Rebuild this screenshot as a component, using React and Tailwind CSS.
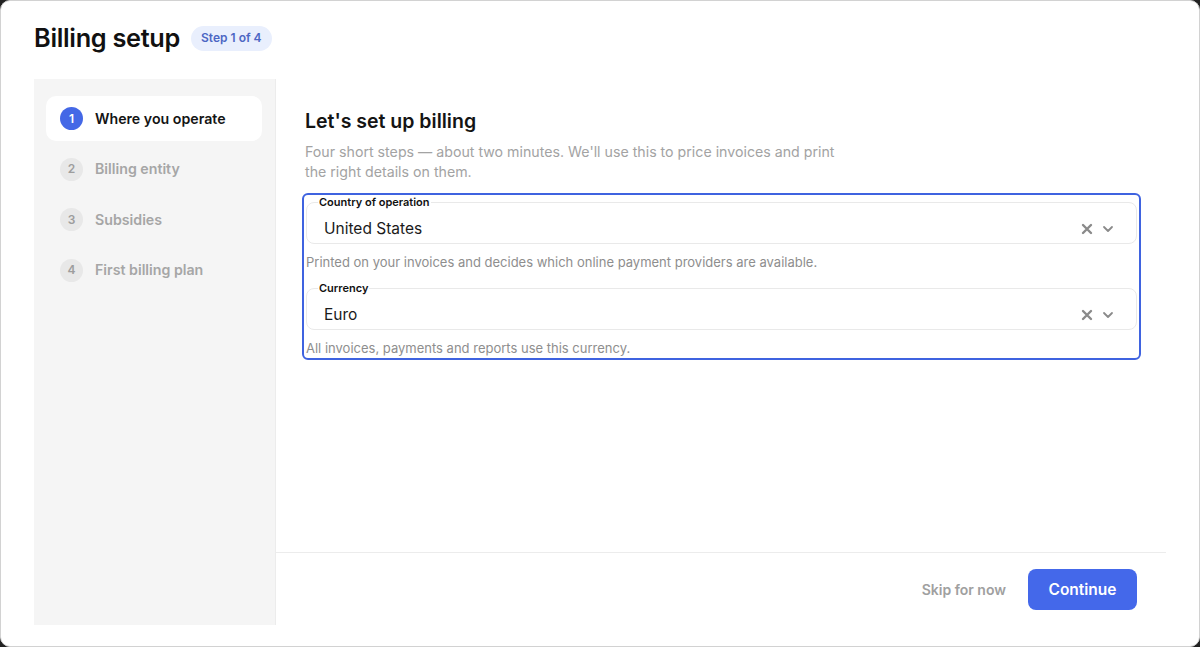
import React from "react";

const font = { fontFamily: "Inter, 'Noto Sans', sans-serif" };

function XIcon() {
  return (
    <svg width="12" height="12" viewBox="0 0 12 12" className="text-[#8a8a8a]">
      <path d="M2 2L10 10M10 2L2 10" stroke="currentColor" strokeWidth="2.4" strokeLinecap="round" />
    </svg>
  );
}
function Chevron() {
  return (
    <svg width="12" height="12" viewBox="0 0 12 12" className="text-[#8a8a8a]">
      <path d="M2 4L6 8L10 4" stroke="currentColor" strokeWidth="1.8" fill="none" strokeLinecap="round" strokeLinejoin="round" />
    </svg>
  );
}

function Field({ label, value }) {
  return (
    <fieldset className="border border-[#e9e9e9] rounded-lg pl-[11px] pr-[22px] m-0 min-w-0">
      <legend className="px-[1px] text-[11px] leading-[14px] font-semibold text-[#111]">{label}</legend>
      <div className="h-[34px] flex items-center pl-[6px] pt-[6px]">
        <span className="flex-1 text-[15.5px] text-[#1a1a1a]">{value}</span>
        <div className="flex items-center gap-[9px]">
          <XIcon />
          <Chevron />
        </div>
      </div>
    </fieldset>
  );
}

function Step({ n, label, active }) {
  return (
    <div
      className={
        "h-[45px] flex items-center gap-[12px] px-[14px] rounded-[10px] " +
        (active ? "bg-white" : "")
      }
    >
      <div
        className={
          "w-[23px] h-[23px] rounded-full flex items-center justify-center text-[12px] font-semibold " +
          (active ? "bg-[#4468e6] text-white" : "bg-[#e8e8e8] text-[#9d9d9d]")
        }
      >
        {n}
      </div>
      <span className={"text-[14.2px] font-semibold " + (active ? "text-[#141414]" : "text-[#a6a6a6]")}>
        {label}
      </span>
    </div>
  );
}

export default function App() {
  return (
    <div className="w-[1200px] h-[647px] bg-[#222]" style={font}>
      <div className="w-full h-full bg-white rounded-[10px] border border-[#d2d2d2] flex flex-col pl-[33px] pr-[33px]">
        <div className="h-[78px] flex items-center gap-[11px] pb-[4px]">
          <h1 className="text-[25.3px] font-semibold text-[#111] tracking-[-0.3px]">Billing setup</h1>
          <span className="h-[25px] px-[10px] rounded-full bg-[#e9effd] text-[#4d67c4] text-[12px] font-semibold flex items-center">
            Step 1 of 4
          </span>
        </div>
        <div className="flex-1 flex mb-[21px] min-h-0">
          <div className="w-[242px] bg-[#f5f5f5] border-r border-[#ececec] pl-[12px] pr-[13px] pt-[17px] flex flex-col gap-[5.5px]">
            <Step n="1" label="Where you operate" active />
            <Step n="2" label="Billing entity" />
            <Step n="3" label="Subsidies" />
            <Step n="4" label="First billing plan" />
          </div>
          <div className="flex-1 flex flex-col">
            <div className="flex-1 pl-[29px] pr-[25px] pt-[28px]">
              <h2 className="text-[19.5px] font-semibold text-[#141414] leading-[28px]">Let's set up billing</h2>
              <p className="mt-[7px] max-w-[545px] text-[14.2px] leading-[20px] text-[#a3a3a3]">
                Four short steps — about two minutes. We'll use this to price invoices and print the right details on them.
              </p>
              <div className="mt-[11px] -ml-[3px] border-2 border-[#3f63e0] rounded-[6px] px-[2px] pb-[2px]">
                <Field label="Country of operation" value="United States" />
                <p className="mt-[10px] mb-[11px] text-[13px] leading-[16px] text-[#8e8e8e]">
                  Printed on your invoices and decides which online payment providers are available.
                </p>
                <Field label="Currency" value="Euro" />
                <p className="mt-[10px] text-[13px] leading-[16px] text-[#8e8e8e]">
                  All invoices, payments and reports use this currency.
                </p>
              </div>
            </div>
            <div className="border-t border-[#ececec] h-[73px] flex items-center justify-end gap-[22px] pr-[29px] pt-[1px]">
              <span className="text-[14px] font-semibold text-[#a0a0a0]">Skip for now</span>
              <button className="h-[41px] w-[109px] rounded-lg bg-[#4468ea] text-white text-[15.5px] font-semibold">
                Continue
              </button>
            </div>
          </div>
        </div>
      </div>
    </div>
  );
}
